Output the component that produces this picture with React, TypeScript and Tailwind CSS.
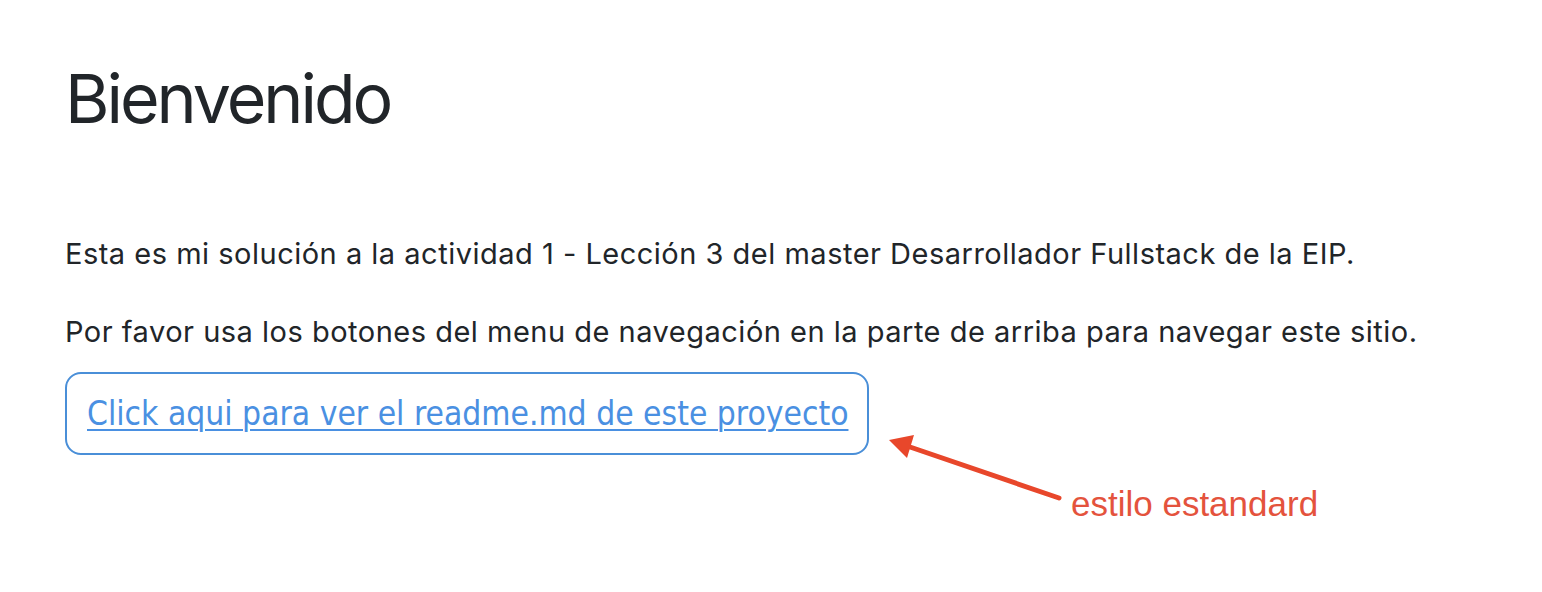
export default function App() {
  return (
    <div className="relative h-[592px] w-[1542px] bg-white font-['Inter','Noto_Sans',sans-serif] text-[#212529]">
      <div className="px-[65px] pt-[58px]">
        <h1 className="text-[68px] leading-[80px] font-normal tracking-[-3px]">Bienvenido</h1>
        <p className="mt-[96px] text-[29px] leading-[40px] tracking-[0.5px]">
          Esta es mi solución a la actividad 1 - Lección 3 del master Desarrollador Fullstack de la EIP.
        </p>
        <p className="mt-[38px] text-[29px] leading-[40px] tracking-[0.5px]">
          Por favor usa los botones del menu de navegación en la parte de arriba para navegar este sitio.
        </p>
        <div className="mt-[20px] flex">
          <a
            href="#"
            className="flex h-[83px] w-[804px] items-center rounded-[16px] border-2 border-[#4a8fd8] pl-[20px] font-['DejaVu_Sans_Condensed','DejaVu_Sans',sans-serif] text-[33.3px] leading-[40px] text-[#4a90e2] underline decoration-2 underline-offset-[4px]"
          >
            Click aqui para ver el readme.md de este proyecto
          </a>
        </div>
      </div>

      {/* annotation arrow */}
      <svg className="absolute left-0 top-0" width="1542" height="592" viewBox="0 0 1542 592">
        <line x1="1059" y1="498" x2="910" y2="447" stroke="#e8472b" strokeWidth="5" strokeLinecap="round" />
        <polygon points="889,440 914,435 907,458" fill="#e8472b" />
      </svg>
      <span className="absolute left-[1071px] top-[484px] font-['Liberation_Sans',sans-serif] text-[35px] leading-[40px] text-[#e4533d]">
        estilo estandard
      </span>
    </div>
  );
}
